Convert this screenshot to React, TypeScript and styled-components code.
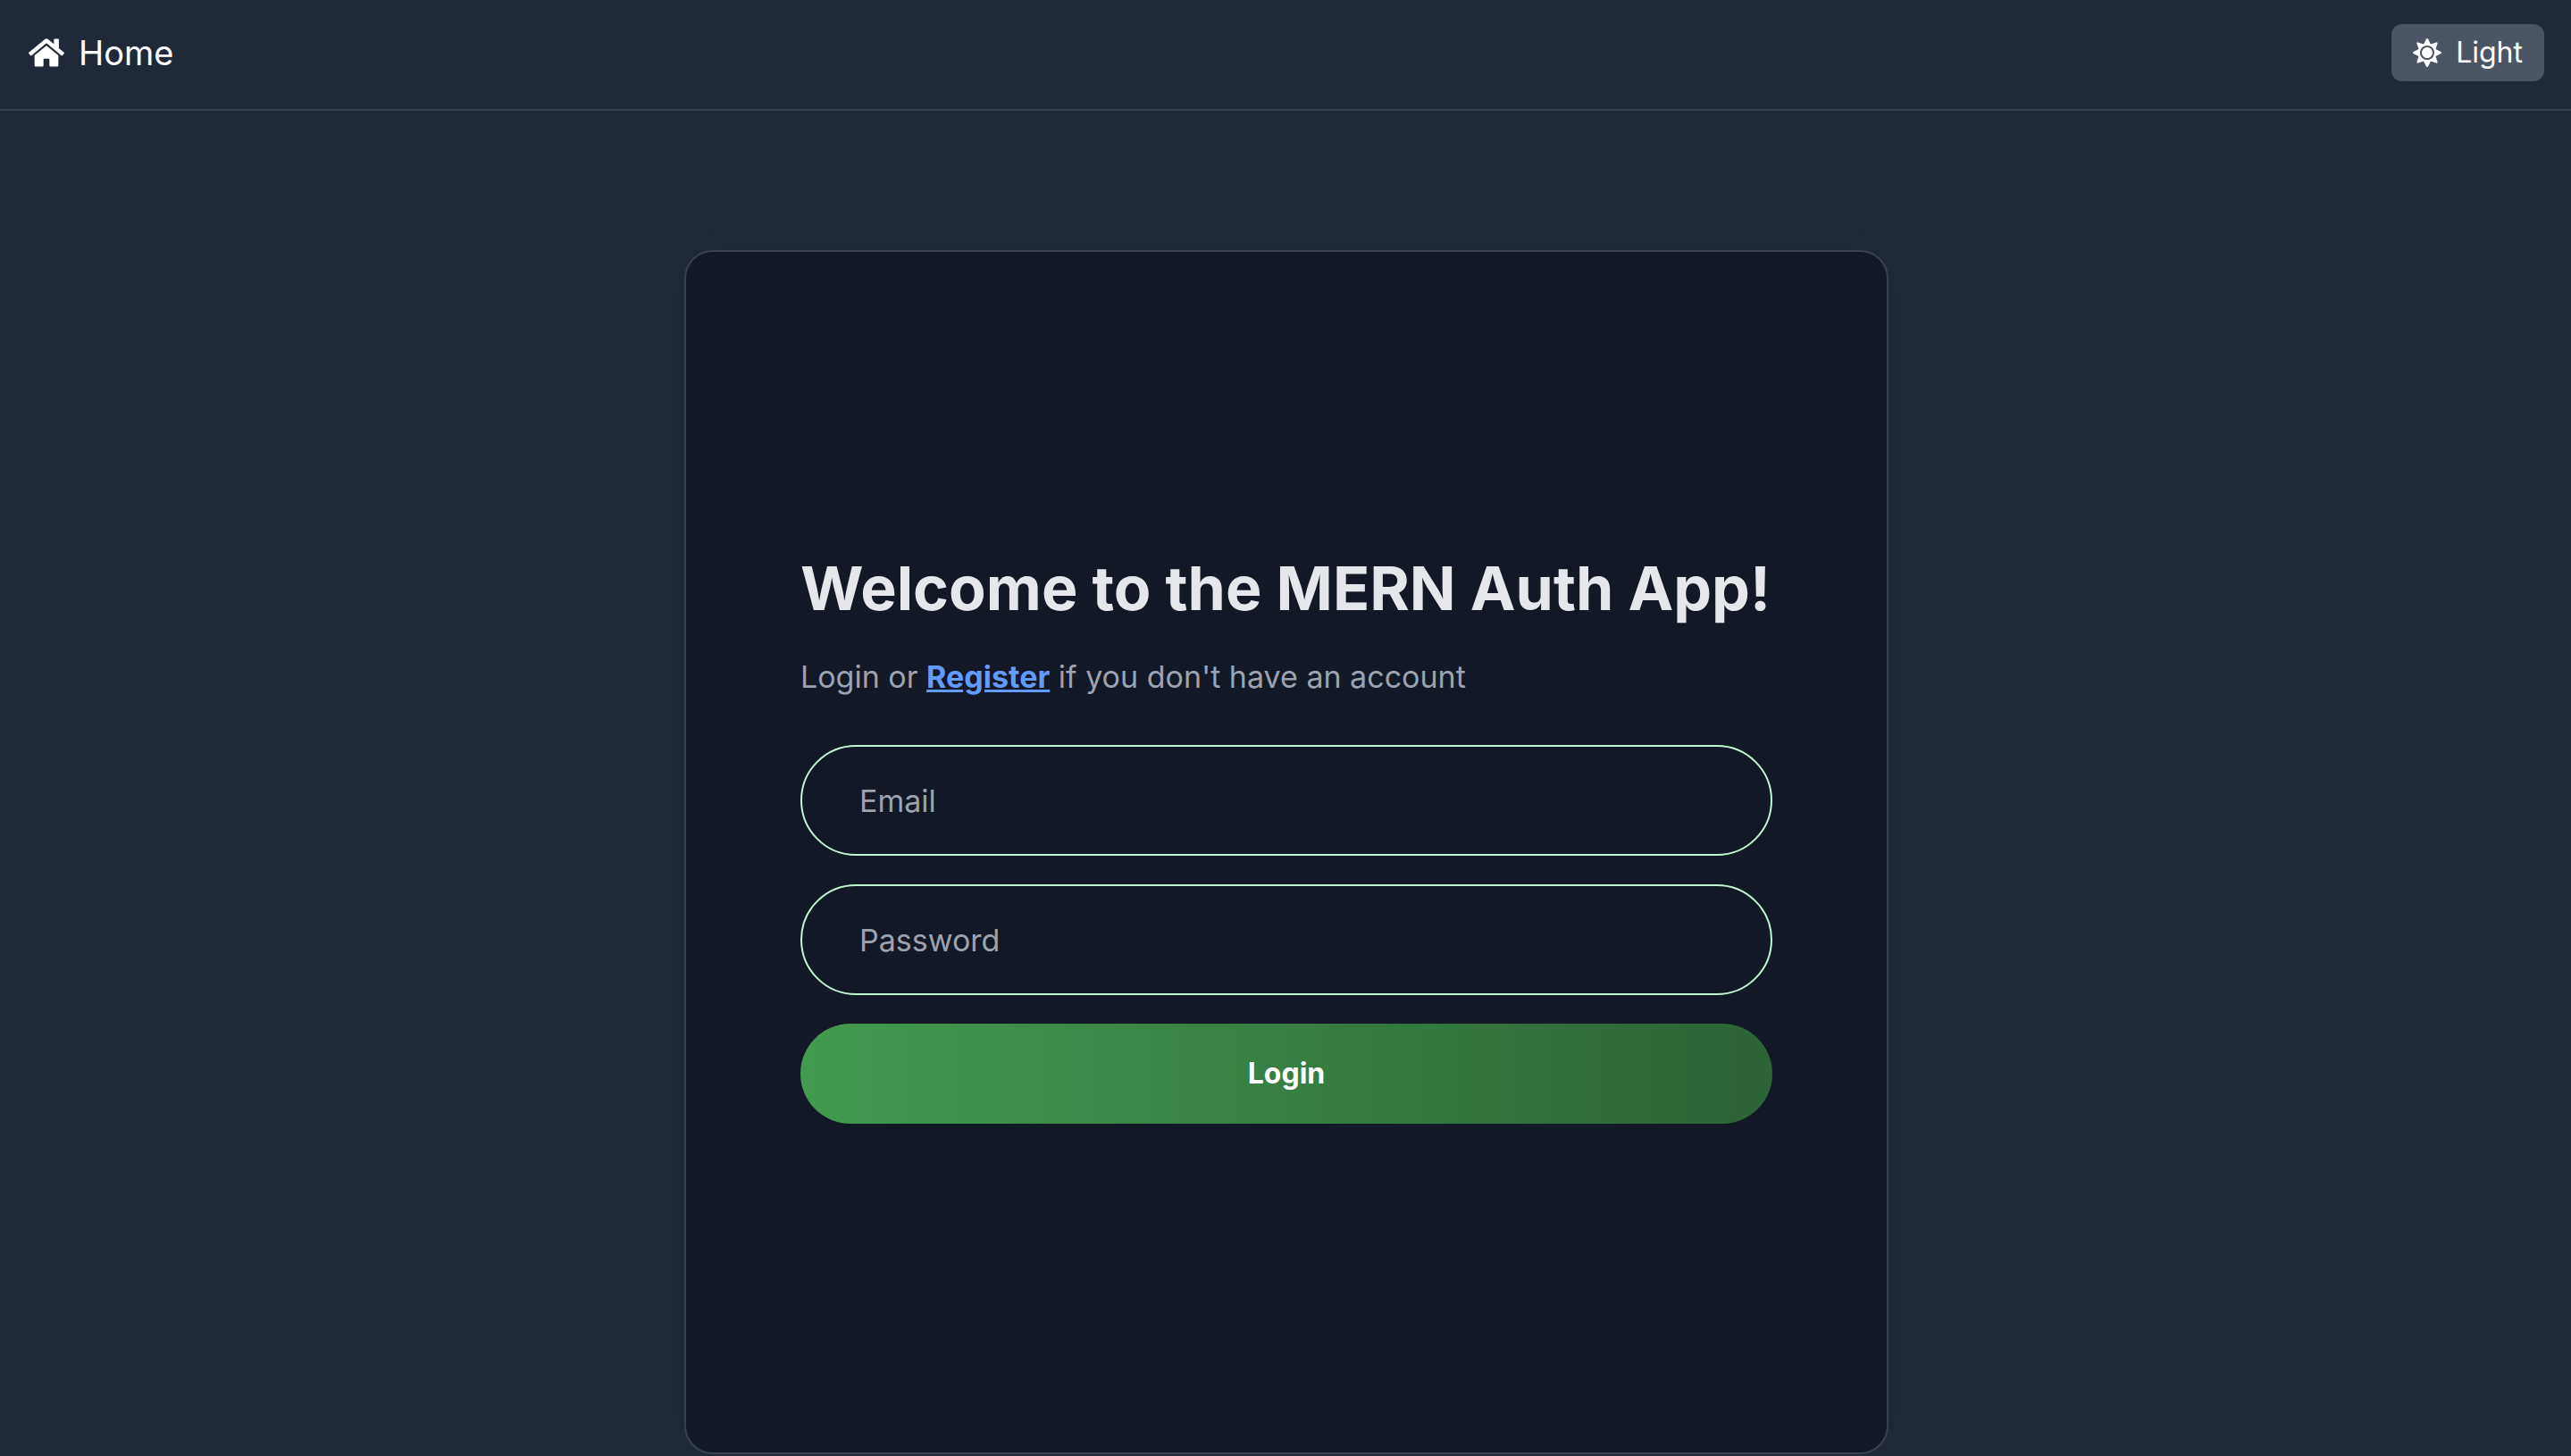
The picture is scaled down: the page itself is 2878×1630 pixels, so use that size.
import React, { useState } from "react";
import styled, { createGlobalStyle } from "styled-components";
import { FaHome, FaSun } from "react-icons/fa";

const GlobalStyle = createGlobalStyle`
  *, *::before, *::after { box-sizing: border-box; }
  body {
    margin: 0;
    background: #202938;
    color: #fff;
    font-family: Inter, "Liberation Sans", sans-serif;
    font-size: 32px;
    line-height: 48px;
  }
  button, input { font: inherit; }
`;

const Header = styled.header`
  display: flex;
  align-items: center;
  justify-content: space-between;
  padding: 27px 30px 31px 32px;
  border-bottom: 2px solid #394150;
`;

const HomeLink = styled.a`
  display: flex;
  align-items: center;
  gap: 16px;
  color: #fff;
  font-size: 38px;
  line-height: 56px;
  text-decoration: none;
`;

const HomeIcon = styled(FaHome)`
  width: 40px;
  height: 40px;
`;

const ThemeButton = styled.button`
  display: flex;
  align-items: center;
  gap: 16px;
  padding: 8px 24px;
  border: 0;
  border-radius: 12px;
  background: #4c5563;
  color: #fff;
  cursor: pointer;
`;

const Main = styled.main`
  display: flex;
  justify-content: center;
  padding: 156px 0 0 2px;
`;

const Card = styled.section`
  display: flex;
  flex-direction: column;
  justify-content: center;
  width: 100%;
  max-width: 1348px;
  aspect-ratio: 1;
  padding: 0 128px 28px;
  border: 2px solid #394150;
  border-radius: 32px;
  background: #131826;
  box-shadow: 0 4px 24px rgba(32, 44, 48, 0.6);
`;

const Title = styled.h1`
  margin: 0 0 36px;
  color: #e5e7eb;
  font-size: 68px;
  font-weight: 700;
  line-height: 72px;
`;

const Intro = styled.p`
  margin: 0 0 48px;
  color: #9ca3af;
  font-size: 34px;
  line-height: 56px;
`;

const RegisterLink = styled.a`
  color: #629bff;
  font-weight: 700;
  text-decoration: underline;
`;

const Form = styled.form`
  display: flex;
  flex-direction: column;
  gap: 32px;
`;

const Field = styled.input`
  width: 100%;
  height: 124px;
  padding: 32px 64px;
  border: 2px solid #c0f7cf;
  border-radius: 62px;
  background: transparent;
  color: #e5e7eb;
  font-size: 34px;
  line-height: 56px;

  &::placeholder {
    color: #9ca3af;
    opacity: 1;
  }
`;

const SubmitButton = styled.button`
  padding: 32px;
  border: 0;
  border-radius: 56px;
  background: linear-gradient(to right, #429b4f, #2c6337);
  color: #fff;
  font-weight: 700;
  cursor: pointer;
`;

export default function App() {
  const [email, setEmail] = useState("");
  const [password, setPassword] = useState("");

  return (
    <>
      <GlobalStyle />
      <Header>
        <HomeLink href="#">
          <HomeIcon aria-hidden="true" />
          Home
        </HomeLink>
        <ThemeButton type="button">
          <FaSun aria-hidden="true" />
          Light
        </ThemeButton>
      </Header>
      <Main>
        <Card>
          <Title>Welcome to the MERN Auth App!</Title>
          <Intro>
            Login or <RegisterLink href="#register">Register</RegisterLink> if you don't have an account
          </Intro>
          <Form onSubmit={(e: React.FormEvent) => e.preventDefault()}>
            <Field
              type="email"
              aria-label="Email"
              placeholder="Email"
              value={email}
              onChange={(e) => setEmail(e.target.value)}
            />
            <Field
              type="password"
              aria-label="Password"
              placeholder="Password"
              value={password}
              onChange={(e) => setPassword(e.target.value)}
            />
            <SubmitButton type="submit">Login</SubmitButton>
          </Form>
        </Card>
      </Main>
    </>
  );
}
